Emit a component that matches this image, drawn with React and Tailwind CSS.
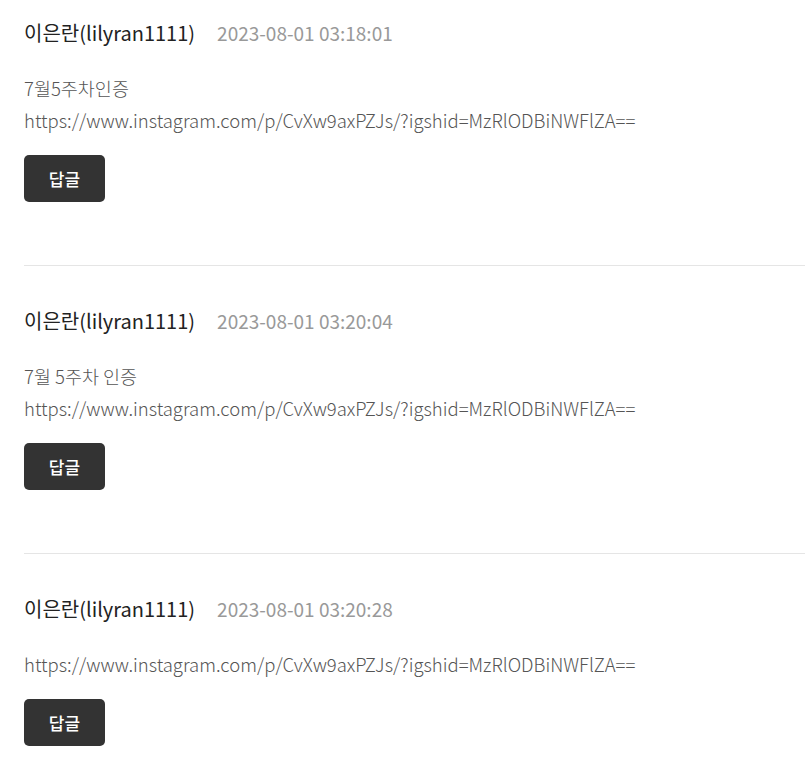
import React from 'react';

const comments = [
  {
    author: '이은란(lilyran1111)',
    date: '2023-08-01 03:18:01',
    lines: ['7월5주차인증', 'https://www.instagram.com/p/CvXw9axPZJs/?igshid=MzRlODBiNWFlZA=='],
  },
  {
    author: '이은란(lilyran1111)',
    date: '2023-08-01 03:20:04',
    lines: ['7월 5주차 인증', 'https://www.instagram.com/p/CvXw9axPZJs/?igshid=MzRlODBiNWFlZA=='],
  },
  {
    author: '이은란(lilyran1111)',
    date: '2023-08-01 03:20:28',
    lines: ['https://www.instagram.com/p/CvXw9axPZJs/?igshid=MzRlODBiNWFlZA=='],
  },
];

const CommentItem = ({ comment, first }) => (
  <div className={`${first ? 'pt-[19px]' : 'pt-[41px]'} pb-[63px] border-b border-[#e5e5e5]`}>
    <div className="flex items-center h-[28px]">
      <span className="text-[20px] text-[#222] font-normal">{comment.author}</span>
      <span className="ml-[22px] text-[19px] text-[#999] font-normal">{comment.date}</span>
    </div>
    <div className="mt-[25px] text-[18.5px] leading-[32px] text-[#555] font-light">
      {comment.lines.map((line, i) => (
        <p key={i}>{line}</p>
      ))}
    </div>
    <button className="mt-[19px] w-[81px] h-[47px] rounded-[5px] bg-[#333] text-white text-[17px] font-medium">
      답글
    </button>
  </div>
);

export default function App() {
  return (
    <div
      className="w-[805px] h-[764px] overflow-hidden bg-white pl-[24px]"
      style={{ fontFamily: '"Noto Sans CJK KR", "Noto Sans", sans-serif' }}
    >
      {comments.map((c, i) => (
        <CommentItem key={i} comment={c} first={i === 0} />
      ))}
    </div>
  );
}
